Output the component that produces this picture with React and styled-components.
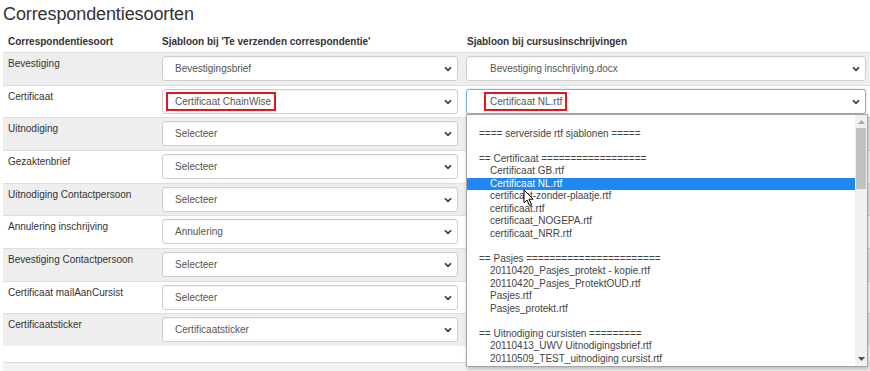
import React from "react";
import styled, { createGlobalStyle } from "styled-components";

const rows = [
  { label: "Bevestiging", first: "Bevestigingsbrief", second: "Bevestiging inschrijving.docx" },
  { label: "Certificaat", first: "Certificaat ChainWise", second: "Certificaat NL.rtf", marked: true },
  { label: "Uitnodiging", first: "Selecteer" },
  { label: "Gezaktenbrief", first: "Selecteer" },
  { label: "Uitnodiging Contactpersoon", first: "Selecteer" },
  { label: "Annulering inschrijving", first: "Annulering" },
  { label: "Bevestiging Contactpersoon", first: "Selecteer" },
  { label: "Certificaat mailAanCursist", first: "Selecteer" },
  { label: "Certificaatsticker", first: "Certificaatsticker" },
];

const options = [
  { text: "==== serverside rtf sjablonen =====", group: true },
  { text: "" },
  { text: "== Certificaat ==================", group: true },
  { text: "Certificaat GB.rtf" },
  { text: "Certificaat NL.rtf", selected: true },
  { text: "certificaat-zonder-plaatje.rtf" },
  { text: "certificaat.rtf" },
  { text: "certificaat_NOGEPA.rtf" },
  { text: "certificaat_NRR.rtf" },
  { text: "" },
  { text: "== Pasjes =======================", group: true },
  { text: "20110420_Pasjes_protekt - kopie.rtf" },
  { text: "20110420_Pasjes_ProtektOUD.rtf" },
  { text: "Pasjes.rtf" },
  { text: "Pasjes_protekt.rtf" },
  { text: "" },
  { text: "== Uitnodiging cursisten =========", group: true },
  { text: "20110413_UWV Uitnodigingsbrief.rtf" },
  { text: "20110509_TEST_uitnodiging cursist.rtf" },
];

const Chevron = () => (
  <ChevronIcon width="8" height="6" viewBox="0 0 8 6">
    <path d="M1 1.3 L4 4.3 L7 1.3" fill="none" stroke="#333" strokeWidth="1.6" />
  </ChevronIcon>
);

const Dropdown = () => (
  <Listbox>
    <OptionList>
      {options.map((item, index) => (
        <Option key={index} $group={item.group} $selected={item.selected}>
          {item.text}
        </Option>
      ))}
      <Cursor width="12" height="18" viewBox="0 0 12 18">
        <path d="M1 1 L1 14 L4 11 L6.5 16.5 L8.5 15.6 L6 10.2 L10.2 10.2 Z" fill="#fff" stroke="#000" strokeWidth="1" strokeLinejoin="round" />
      </Cursor>
    </OptionList>
    <Scrollbar>
      <ScrollArrow viewBox="0 0 7 4" width="7" height="4">
        <path d="M0 4 L3.5 0 L7 4 Z" fill="#a3a3a3" />
      </ScrollArrow>
      <Thumb />
      <ScrollArrow viewBox="0 0 7 4" width="7" height="4">
        <path d="M0 0 L3.5 4 L7 0 Z" fill="#505050" />
      </ScrollArrow>
    </Scrollbar>
  </Listbox>
);

const App = () => {
  return (
    <>
      <GlobalStyle />
      <Page>
        <Title>Correspondentiesoorten</Title>
        <Table>
          <HeadRow>
            <HeadCell $pad={5}>Correspondentiesoort</HeadCell>
            <HeadCell $pad={4}>Sjabloon bij 'Te verzenden correspondentie'</HeadCell>
            <HeadCell $pad={5}>Sjabloon bij cursusinschrijvingen</HeadCell>
          </HeadRow>
          {rows.map((row, index) => (
            <Row key={row.label} $shade={index % 2 === 0}>
              <Label>{row.label}</Label>
              <Cell>
                <SelectBox $indent={12}>
                  {row.marked ? <Mark $left={7}>{row.first}</Mark> : row.first}
                  <Chevron />
                </SelectBox>
              </Cell>
              <Cell>
                {row.second && (
                  <SelectBox $indent={23} $focused={row.marked}>
                    {row.marked ? <Mark $left={4}>{row.second}</Mark> : row.second}
                    <Chevron />
                    {row.marked && <Dropdown />}
                  </SelectBox>
                )}
              </Cell>
            </Row>
          ))}
        </Table>
        <Footer />
      </Page>
    </>
  );
};

const GlobalStyle = createGlobalStyle`
  body {
    margin: 0;
    background: #fff;
    font-family: "Liberation Sans", Arial, sans-serif;
    color: #333;
  }
`;

const Page = styled.div`
  width: 870px;
  height: 371px;
  overflow: hidden;
`;

const Title = styled.h1`
  margin: 0;
  padding: 4px 0 0 3px;
  height: 26px;
  font-size: 18px;
  line-height: 20px;
  font-weight: normal;
  letter-spacing: -0.1px;
  color: #333;
`;

const Table = styled.div`
  margin-left: 3px;
  width: 867px;
`;

const HeadRow = styled.div`
  display: grid;
  grid-template-columns: 155px 304px 1fr;
  height: 22px;
  align-items: center;
`;

const HeadCell = styled.div`
  padding-left: ${({ $pad }) => $pad}px;
  font-size: 10px;
  font-weight: bold;
  color: #333;
`;

const Row = styled.div`
  display: grid;
  grid-template-columns: 155px 304px 1fr;
  height: 32.67px;
  box-sizing: border-box;
  border-top: 1px solid #dedede;
  background: ${({ $shade }) => ($shade ? "#eeeeee" : "#ffffff")};
`;

const Label = styled.div`
  padding: 5px 0 0 5px;
  font-size: 10px;
  line-height: 12px;
  color: #333;
`;

const Cell = styled.div`
  padding: 3px 4px 0 4px;
`;

const SelectBox = styled.div`
  position: relative;
  box-sizing: border-box;
  height: 25px;
  display: flex;
  align-items: center;
  padding-left: ${({ $indent }) => $indent}px;
  background: #fff;
  border: 1px solid ${({ $focused }) => ($focused ? "#7fb2e6" : "#cfcfcf")};
  border-radius: 3px;
  box-shadow: ${({ $focused }) =>
    $focused ? "0 0 2px rgba(102, 175, 233, 0.6)" : "inset 0 1px 1px rgba(0, 0, 0, 0.05)"};
  font-size: 10px;
  color: #555;
  white-space: nowrap;
`;

const Mark = styled.span`
  display: inline-block;
  margin-left: -${({ $left }) => $left + 2}px;
  padding: 1px 3px 1px ${({ $left }) => $left}px;
  line-height: 13px;
  border: 2px solid #e3161f;
`;

const ChevronIcon = styled.svg`
  position: absolute;
  right: 5px;
  top: 9px;
`;

const Listbox = styled.div`
  position: absolute;
  left: -1px;
  top: 24px;
  width: 402px;
  height: 253px;
  box-sizing: border-box;
  display: flex;
  background: #fff;
  border: 1px solid #a6a6a6;
  box-shadow: 1px 2px 4px rgba(0, 0, 0, 0.25);
  z-index: 5;
`;

const OptionList = styled.div`
  position: relative;
  flex: 1;
  padding-top: 13px;
  overflow: hidden;
`;

const Option = styled.div`
  height: 12.5px;
  line-height: 12.5px;
  font-size: 10px;
  white-space: pre;
  padding-left: ${({ $group }) => ($group ? 12 : 23)}px;
  color: ${({ $selected }) => ($selected ? "#fff" : "#444")};
  background: ${({ $selected }) => ($selected ? "#1e88f0" : "transparent")};
`;

const Cursor = styled.svg`
  position: absolute;
  left: 56px;
  top: 74px;
`;

const Scrollbar = styled.div`
  width: 12px;
  background: #f1f1f1;
  display: flex;
  flex-direction: column;
  align-items: center;
  padding: 5px 0 5px;
  box-sizing: border-box;
`;

const ScrollArrow = styled.svg`
  flex: none;
  &:last-child {
    margin-top: auto;
  }
`;

const Thumb = styled.div`
  margin-top: 4px;
  width: 10px;
  height: 61px;
  background: #c1c1c1;
`;

const Footer = styled.div`
  margin-top: 16px;
  margin-left: 3px;
  height: 10px;
  border-top: 1px solid #dcdcdc;
  background: #f3f3f3;
`;

export default App;
